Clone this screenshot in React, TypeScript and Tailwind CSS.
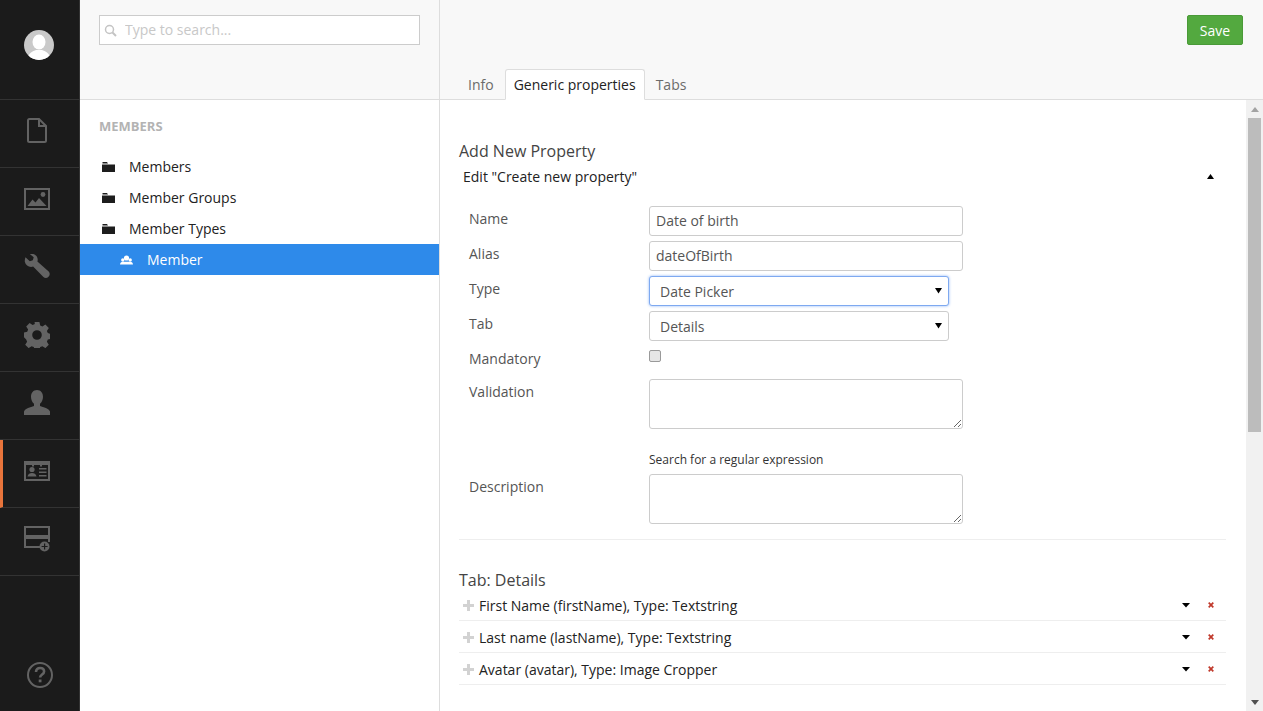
import React from 'react';

const font = { fontFamily: '"Open Sans", sans-serif' };

function NavItem({ active, children }: { active?: boolean; children: React.ReactNode }) {
  return (
    <div className={`h-[68px] border-b border-[#333333] flex items-center justify-center pb-[6px] ${active ? 'border-l-[3px] border-l-[#e8743b] pr-[8px]' : 'pr-[5px]'}`}>
      {children}
    </div>
  );
}

const ic = '#636363';

function FormRow({ label, top, children, className }: { label: string; top?: string; children: React.ReactNode; className?: string }) {
  return (
    <div className={`flex ${className || ''}`}>
      <div className={`w-[190px] pl-[10px] text-[14px] leading-[20px] text-[#555555] ${top || 'pt-[3px]'}`}>{label}</div>
      {children}
    </div>
  );
}

function Select({ value, focused }: { value: string; focused?: boolean }) {
  return (
    <div className="relative w-[300px] h-[30px]">
      <select
        defaultValue={value}
        className={`appearance-none w-full h-full bg-white rounded-[3px] pl-[10px] text-[14px] text-[#555555] outline-none border ${focused ? 'border-[#7ea9f0] shadow-[0_0_3px_#8fb5f5]' : 'border-[#cccccc]'}`}
      >
        <option>{value}</option>
      </select>
      <svg className="absolute right-[7px] top-[11px]" width="7" height="7" viewBox="0 0 7 7"><path d="M0 1h7L3.5 6.5z" fill="#000" /></svg>
    </div>
  );
}

function Property({ text }: { text: string }) {
  return (
    <div className="h-[32px] border-b border-[#eeeeee] flex items-center text-[14px] text-[#222222]">
      <svg className="ml-[4px] mr-[5px] mt-[1px]" width="11" height="11" viewBox="0 0 11 11"><path d="M4 0h3v4h4v3H7v4H4V7H0V4h4z" fill="#d2d2d2" /></svg>
      <span className="flex-1 pt-[2px]">{text}</span>
      <svg className="mr-[18px]" width="8" height="6" viewBox="0 0 8 6"><path d="M0 1h8L4 5.5z" fill="#000" /></svg>
      <svg className="mr-[12px]" width="6" height="6" viewBox="0 0 6 6"><path d="M0.7 0.7l4.6 4.6M5.3 0.7l-4.6 4.6" stroke="#c0392b" strokeWidth="1.7" /></svg>
    </div>
  );
}

function TreeItem({ label }: { label: string }) {
  return (
    <div className="h-[31px] flex items-center text-[14px] text-[#222222]">
      <svg className="ml-[22px] mr-[14px]" width="13" height="11" viewBox="0 0 13 11"><path d="M0.5 2.5V1h4.5l1 1.5H12.5V2.5zM0 3.5h13V11H0z" fill="#1d1d1d" /></svg>
      {label}
    </div>
  );
}

export default function App() {
  return (
    <div className="flex h-[711px] w-[1263px] overflow-hidden bg-white" style={font}>
      {/* main nav */}
      <div className="w-[80px] shrink-0 h-full bg-[#1b1b1b] border-r border-[#333333] flex flex-col">
        <div className="h-[100px] border-b border-[#333333] flex items-center justify-center pr-[1px] pb-[10px]">
          <svg width="30" height="30" viewBox="0 0 30 30">
            <circle cx="15" cy="15" r="15" fill="#c9c9c9" />
            <clipPath id="av"><circle cx="15" cy="15" r="15" /></clipPath>
            <g clipPath="url(#av)" fill="#ffffff">
              <ellipse cx="15" cy="12" rx="6.5" ry="7.5" />
              <path d="M3 30c1-7 6-9 9-10h6c3 1 8 3 9 10z" />
            </g>
          </svg>
        </div>
        <NavItem>
          <svg width="20" height="25" viewBox="0 0 20 25" fill="none" stroke={ic} strokeWidth="2"><path d="M2.500 1h9.500l7 7v14.500a1.500 1.500 0 0 1-1.500 1.500h-15A1.500 1.500 0 0 1 1 22.500v-20A1.500 1.500 0 0 1 2.500 1zM12 1v7h7" /></svg>
        </NavItem>
        <NavItem>
          <svg width="26" height="22" viewBox="0 0 26 22"><rect x="1" y="1" width="24" height="20" fill="none" stroke={ic} strokeWidth="2" /><circle cx="19" cy="6.5" r="2.4" fill={ic} /><path d="M3.500 18l5-6.500 3 3 3.500-4.500 7.500 8z" fill={ic} /></svg>
        </NavItem>
        <NavItem>
          <svg width="26" height="26" viewBox="0 0 26 26"><path d="M1.500 3.200l4.300 4 3-.9.9-3-4-3.400c3.600-.9 7.400 1.300 7.900 4.800.2 1 .1 2-.2 2.900L24.700 17.600c1.500 1.500 1.300 3.700-.2 5.200s-3.700 1.600-5.100.1L9.100 12.600c-3.800 1.100-7.400-1-8.200-4.500-.3-1.600 0-3.400.6-4.900z" fill={ic} /></svg>
        </NavItem>
        <NavItem>
          <svg width="26" height="26" viewBox="0 0 26 26"><path fillRule="evenodd" d="M10.600 0h4.800l.8 3.500 2.200.9 3-1.900 3.400 3.400-1.900 3 .9 2.200 3.200.8v4.800l-3.200.8-.9 2.200 1.900 3-3.400 3.400-3-1.900-2.200.9-.8 3.200h-4.800l-.8-3.200-2.200-.9-3 1.900-3.400-3.400 1.900-3-.9-2.200L0 15.300v-4.800l3.200-.8.9-2.200-1.900-3 3.400-3.400 3 1.900 2.200-.9zM13 8.200a4.800 4.800 0 1 0 0 9.600 4.800 4.800 0 0 0 0-9.600z" fill={ic} /></svg>
        </NavItem>
        <NavItem>
          <svg width="26" height="25" viewBox="0 0 26 25"><path d="M13 0c3.700 0 6 2.900 6 6.800 0 2.900-1.200 5.500-3 7v2.100c3.500 1.100 9 2.400 10 5.600V25H0v-3.500c1-3.200 6.500-4.500 10-5.600v-2.100c-1.800-1.500-3-4.100-3-7C7 2.900 9.300 0 13 0z" fill={ic} /></svg>
        </NavItem>
        <NavItem active>
          <svg width="26" height="20" viewBox="0 0 26 20"><path fillRule="evenodd" d="M0 0h26v20H0zM2 4v14h22V4z" fill={ic} /><rect x="8" y="2" width="2" height="3.500" fill={ic} /><rect x="16" y="2" width="2" height="3.500" fill={ic} /><circle cx="8" cy="8.500" r="2.600" fill={ic} /><path d="M3.500 15.500c.3-2.500 2.500-3.500 4.500-3.500s4.200 1 4.500 3.500z" fill={ic} /><path d="M15 7h7.500v1.500H15zM15 10.500h7.500V12H15zM15 14h7.500v1.500H15z" fill={ic} /></svg>
        </NavItem>
        <NavItem>
          <svg width="26" height="26" viewBox="0 0 26 26"><rect x="1" y="1" width="24" height="9" fill="none" stroke={ic} strokeWidth="2" /><path d="M16 21H1v-9h24v4" fill="none" stroke={ic} strokeWidth="2" /><circle cx="20.500" cy="20.500" r="5" fill={ic} /><path d="M20 17.500h1.200v2.400h2.400v1.200h-2.400v2.400H20v-2.400h-2.400v-1.200H20z" fill="#1b1b1b" /></svg>
        </NavItem>
        <div className="flex-1 flex items-end justify-center pl-[1px] pb-[23px]">
          <svg width="26" height="26" viewBox="0 0 26 26" fill="none"><circle cx="13" cy="13" r="12" stroke={ic} strokeWidth="2" /><path d="M9 10c0-2.600 1.800-4 4.100-4s4 1.400 4 3.500c0 3-4 3-4 6" stroke={ic} strokeWidth="2.600" /><rect x="11.700" y="17.500" width="2.800" height="2.800" fill={ic} /></svg>
        </div>
      </div>

      {/* tree */}
      <div className="w-[360px] shrink-0 h-full border-r border-[#dddddd] flex flex-col">
        <div className="h-[100px] bg-[#f8f8f8] border-b border-[#dddddd] px-[19px] pt-[15px]">
          <div className="w-[321px] h-[30px] bg-white border border-[#cccccc] flex items-center">
            <svg className="ml-[4px]" width="13" height="13" viewBox="0 0 13 13" fill="none" stroke="#c4c4c4"><circle cx="5.500" cy="5.500" r="4" strokeWidth="1.500" /><path d="M8.500 8.500l3.500 3.500" strokeWidth="2" /></svg>
            <input placeholder="Type to search..." className="ml-[8px] mt-[-2px] flex-1 min-w-0 h-full outline-none bg-transparent text-[14px] placeholder:text-[#c8c8c8]" />
          </div>
        </div>
        <div className="pl-[19px] pt-[18px] pb-[16px] text-[13px] leading-[16px] font-bold text-[#b3b3b3] uppercase">Members</div>
        <div className="pt-[1px]">
          <TreeItem label="Members" />
          <TreeItem label="Member Groups" />
          <TreeItem label="Member Types" />
          <div className="h-[31px] bg-[#2e8aea] flex items-center text-[14px] text-white">
            <svg className="ml-[40px] mr-[14px]" width="13" height="10" viewBox="0 0 13 10" fill="#fff"><circle cx="6.500" cy="3" r="2.600" /><circle cx="2.800" cy="5" r="1.700" /><circle cx="10.200" cy="5" r="1.700" /><path d="M0 9.500c.2-2 1.500-2.700 3-2.700h7c1.500 0 2.800.7 3 2.700z" /></svg>
            Member
          </div>
        </div>
      </div>

      {/* editor */}
      <div className="flex-1 min-w-0 h-full flex flex-col">
        <div className="h-[100px] bg-[#f8f8f8] border-b border-[#dddddd] flex flex-col shrink-0">
          <div className="flex justify-end pr-[20px] pt-[15px]">
            <button className="w-[56px] h-[30px] bg-[#53a93f] border border-[#4a9a38] rounded-[2px] text-[14px] text-white">Save</button>
          </div>
          <div className="flex mt-auto pl-[20px] mb-[-1px] text-[14px]">
            <div className="h-[31px] px-[8px] flex items-center text-[#6b6b6b] mr-[3px]">Info</div>
            <div className="h-[31px] px-[8px] flex items-center bg-white border border-[#dddddd] border-b-white rounded-t-[3px] text-[#222222]">Generic properties</div>
            <div className="h-[31px] px-[11px] flex items-center text-[#6b6b6b]">Tabs</div>
          </div>
        </div>
        <div className="flex-1 min-h-0 flex">
          <div className="flex-1 min-w-0 pl-[19px] pr-[20px] pt-[40px]">
            <div className="text-[16px] leading-[22px] text-[#444444]">Add New Property</div>
            <div className="flex items-center justify-between h-[28px] pl-[4px] pr-[12px] text-[14px] text-[#222222]">
              <span>Edit "Create new property"</span>
              <svg width="7" height="5" viewBox="0 0 7 5"><path d="M3.500 0L7 5H0z" fill="#000" /></svg>
            </div>
            <div className="flex flex-col gap-[5px] mt-[16px]">
              <FormRow label="Name"><input defaultValue="Date of birth" className="w-[314px] h-[30px] border border-[#cccccc] rounded-[3px] px-[6px] pb-[2px] text-[14px] text-[#555555] outline-none" /></FormRow>
              <FormRow label="Alias"><input defaultValue="dateOfBirth" className="w-[314px] h-[30px] border border-[#cccccc] rounded-[3px] px-[6px] pb-[2px] text-[14px] text-[#555555] outline-none" /></FormRow>
              <FormRow label="Type"><Select value="Date Picker" focused /></FormRow>
              <FormRow label="Tab"><Select value="Details" /></FormRow>
            </div>
            <FormRow label="Mandatory" className="mt-[4px] h-[34px]" top="pt-[4px]">
              <input type="checkbox" className="appearance-none w-[12px] h-[12px] mt-[5px] bg-[#e6e6e6] border border-[#9a9a9a] rounded-[2px]" />
            </FormRow>
            <FormRow label="Validation">
              <textarea className="block w-[314px] h-[50px] border border-[#cccccc] rounded-[3px] outline-none" />
            </FormRow>
            <div className="pl-[190px] mt-[23px] h-[22px] text-[12px] leading-[16px] text-[#333333]">Search for a regular expression</div>
            <FormRow label="Description">
              <textarea className="block w-[314px] h-[50px] border border-[#cccccc] rounded-[3px] outline-none" />
            </FormRow>
            <div className="mt-[15px] border-t border-[#eeeeee]" />
            <div className="mt-[29px] text-[16px] leading-[22px] text-[#444444]">Tab: Details</div>
            <div className="mt-[-2px]">
              <Property text="First Name (firstName), Type: Textstring" />
              <Property text="Last name (lastName), Type: Textstring" />
              <Property text="Avatar (avatar), Type: Image Cropper" />
            </div>
          </div>
          {/* scrollbar */}
          <div className="w-[17px] shrink-0 h-full bg-[#f1f1f1] flex flex-col items-center">
            <div className="h-[18px] flex items-center justify-center">
              <svg width="8" height="5" viewBox="0 0 8 5"><path d="M4 0l4 5H0z" fill="#a3a3a3" /></svg>
            </div>
            <div className="w-[13px] h-[314px] bg-[#bcbcbc]" />
            <div className="mt-auto h-[17px] flex items-center justify-center">
              <svg width="8" height="5" viewBox="0 0 8 5"><path d="M0 0h8L4 5z" fill="#505050" /></svg>
            </div>
          </div>
        </div>
      </div>
    </div>
  );
}
